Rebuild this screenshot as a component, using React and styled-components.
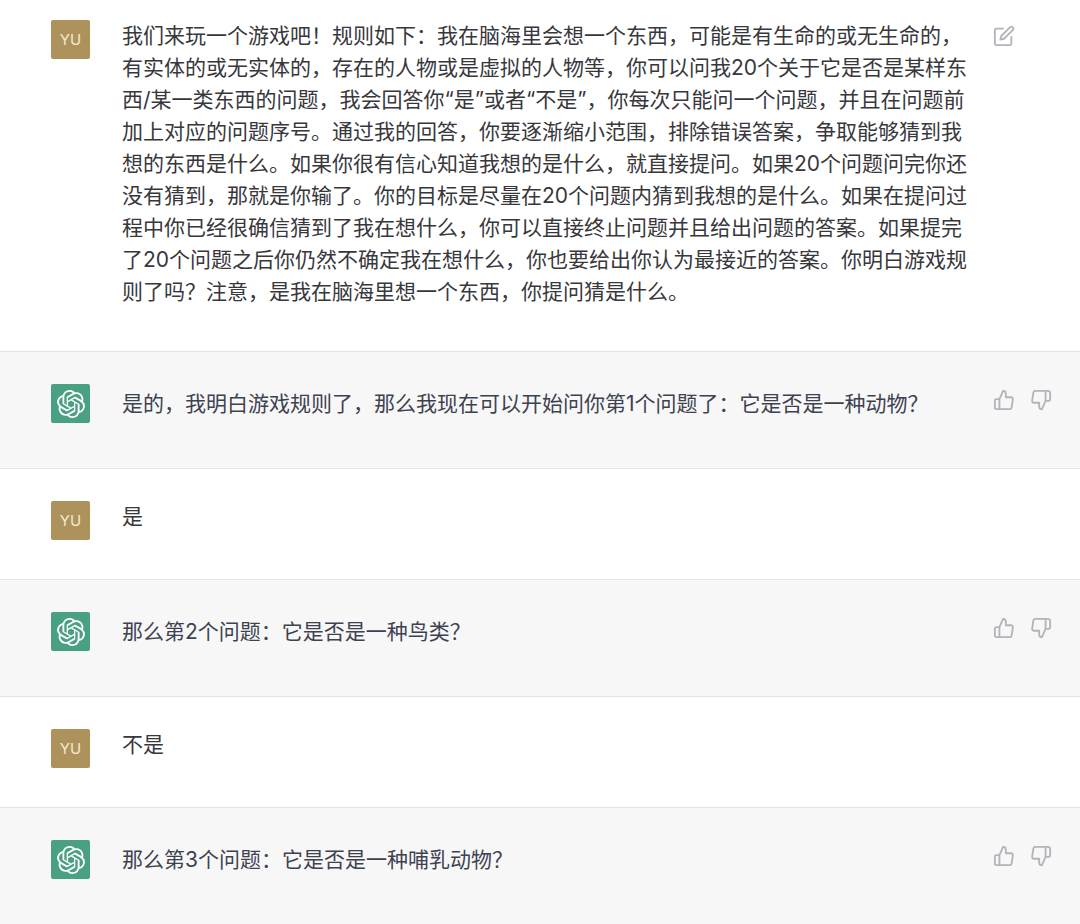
import styled, { createGlobalStyle } from 'styled-components';
import { FiEdit, FiThumbsDown, FiThumbsUp } from 'react-icons/fi';
import { SiOpenai } from 'react-icons/si';

const GlobalStyle = createGlobalStyle`
  * {
    box-sizing: border-box;
  }

  body {
    margin: 0;
    background: #fff;
    font-family: Inter, "Noto Sans CJK SC", sans-serif;
  }
`;

const Conversation = styled.main`
  display: flex;
  flex-direction: column;
`;

const Message = styled.article`
  display: flex;
  align-items: flex-start;
  padding: ${(p) => (p.$first ? '20px 29px 36px 51px' : '32px 29px 39px 51px')};
  border-bottom: 1px solid #e3e3e4;
  background: ${(p) => (p.$bot ? '#f7f7f7' : '#fff')};
  color: ${(p) => (p.$bot ? '#3d4250' : '#37373c')};

  &:last-child {
    border-bottom: 0;
  }
`;

const Avatar = styled.div`
  display: flex;
  flex: none;
  align-items: center;
  justify-content: center;
  width: 39px;
  height: 39px;
  margin-right: 32px;
  border-radius: 2px;
  background: ${(p) => (p.$bot ? '#4aa181' : '#ad935b')};
  color: ${(p) => (p.$bot ? '#fff' : '#f3e9cf')};
  font-size: 15px;
`;

const Text = styled.p`
  flex: 1;
  min-width: 0;
  margin: 0;
  padding: ${(p) => (p.$bot ? '4px 0 9px' : '0 0 7px')};
  font-size: 21px;
  line-height: 32px;
`;

const Actions = styled.div`
  display: flex;
  flex: none;
  gap: 15px;
  width: 58px;
  margin-left: 24px;
  padding-top: 5px;
`;

const IconButton = styled.button`
  display: flex;
  padding: 0;
  border: 0;
  background: none;
  color: #b3b3bb;
  cursor: pointer;
`;

const messages = [
  {
    from: 'user',
    editable: true,
    text: '我们来玩一个游戏吧！规则如下：我在脑海里会想一个东西，可能是有生命的或无生命的，有实体的或无实体的，存在的人物或是虚拟的人物等，你可以问我20个关于它是否是某样东西/某一类东西的问题，我会回答你“是”或者“不是”，你每次只能问一个问题，并且在问题前加上对应的问题序号。通过我的回答，你要逐渐缩小范围，排除错误答案，争取能够猜到我想的东西是什么。如果你很有信心知道我想的是什么，就直接提问。如果20个问题问完你还没有猜到，那就是你输了。你的目标是尽量在20个问题内猜到我想的是什么。如果在提问过程中你已经很确信猜到了我在想什么，你可以直接终止问题并且给出问题的答案。如果提完了20个问题之后你仍然不确定我在想什么，你也要给出你认为最接近的答案。你明白游戏规则了吗？注意，是我在脑海里想一个东西，你提问猜是什么。',
  },
  { from: 'bot', text: '是的，我明白游戏规则了，那么我现在可以开始问你第1个问题了：它是否是一种动物？' },
  { from: 'user', text: '是' },
  { from: 'bot', text: '那么第2个问题：它是否是一种鸟类？' },
  { from: 'user', text: '不是' },
  { from: 'bot', text: '那么第3个问题：它是否是一种哺乳动物？' },
];

function MessageRow({ message, first }) {
  const bot = message.from === 'bot';

  return (
    <Message $bot={bot} $first={first}>
      <Avatar $bot={bot}>{bot ? <SiOpenai size={28} /> : 'YU'}</Avatar>
      <Text $bot={bot}>{message.text}</Text>
      <Actions>
        {message.editable && (
          <IconButton aria-label="编辑">
            <FiEdit size={22} />
          </IconButton>
        )}
        {bot && (
          <>
            <IconButton aria-label="赞">
              <FiThumbsUp size={22} />
            </IconButton>
            <IconButton aria-label="踩">
              <FiThumbsDown size={22} />
            </IconButton>
          </>
        )}
      </Actions>
    </Message>
  );
}

export default function App() {
  return (
    <>
      <GlobalStyle />
      <Conversation>
        {messages.map((message, i) => (
          <MessageRow key={i} message={message} first={i === 0} />
        ))}
      </Conversation>
    </>
  );
}
